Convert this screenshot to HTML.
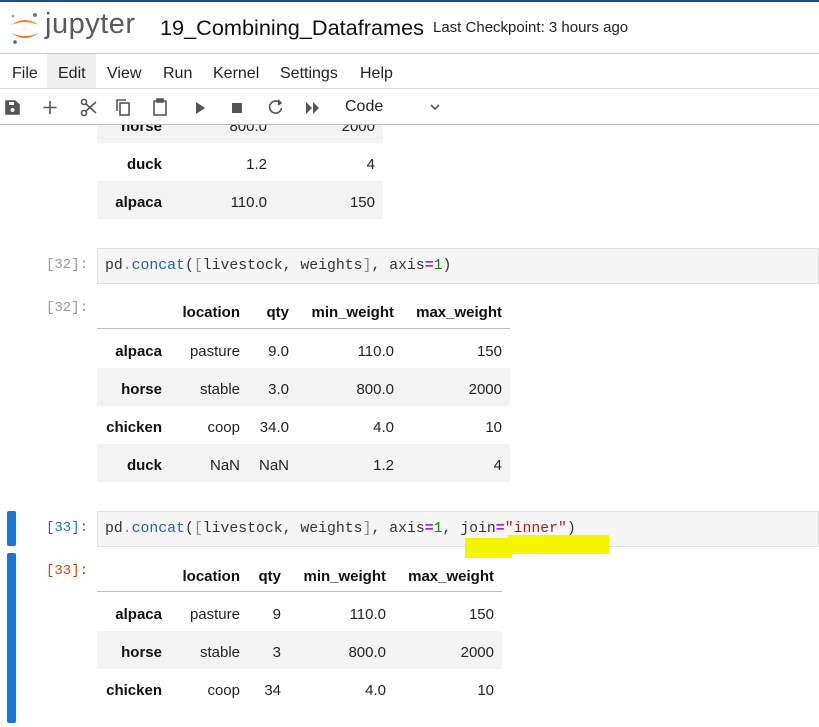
<!DOCTYPE html>
<html><head><meta charset="utf-8"><style>
*{margin:0;padding:0;box-sizing:border-box}
body{width:819px;height:727px;overflow:hidden;background:#fff;position:relative;font-family:"Liberation Sans",sans-serif;color:#222}
.a{position:absolute}
.c{position:absolute;top:3px;height:38px;line-height:38px;text-align:right;font-size:15px;white-space:nowrap;color:#222}
.b{font-weight:bold;color:#111}
.row{position:absolute;height:38px}
.g{background:#f3f3f3}
.code{position:absolute;background:#f5f5f5;border:1px solid #e0e0e0;height:36px;font-family:"Liberation Mono",monospace;font-size:14.8px;line-height:34px;padding-left:7px;color:#333;white-space:pre}
.pr{position:absolute;font-family:"Liberation Mono",monospace;font-size:14px;color:#999}
.k{color:#2060b0}.o{color:#a020f0;font-weight:bold}.n{color:#108010}.s{color:#b02020}.br{color:#888}
.mi span{position:absolute;top:2px;line-height:34px;font-size:16px;color:#222}
</style></head><body>
<div class="a" style="left:0;top:0;width:819px;height:2px;background:#1a4f8c"></div>
<svg class="a" style="left:8px;top:10px" width="34" height="36" viewBox="0 0 34 36">
<path d="M3 15 Q17 5 31 15 Q17 9 3 15Z" fill="#f37726"/>
<path d="M3 23 Q17 33 31 23 Q17 29 3 23Z" fill="#f37726"/>
<circle cx="27" cy="5" r="2" fill="#767677"/><circle cx="5" cy="6" r="1.3" fill="#989798"/><circle cx="7" cy="32" r="1.8" fill="#616262"/>
</svg>
<div class="a" style="left:45px;top:8px;font-size:29px;color:#5a5a5a;letter-spacing:0.5px">jupyter</div>
<div class="a" style="left:160px;top:15px;font-size:21.7px;color:#111">19_Combining_Dataframes</div>
<div class="a" style="left:433px;top:19px;font-size:15px;color:#222">Last Checkpoint: 3 hours ago</div>
<div class="a" style="left:0;top:53px;width:819px;height:1px;background:#c8c8c8"></div>
<div class="a" style="left:47px;top:54px;width:49px;height:34px;background:#eee"></div>
<div class="a mi" style="left:0;top:55px;width:819px;height:34px">
<span style="left:12px">File</span><span style="left:58px">Edit</span><span style="left:107px">View</span><span style="left:163px">Run</span><span style="left:213px">Kernel</span><span style="left:280px">Settings</span><span style="left:360px">Help</span></div>
<div class="a" style="left:0;top:88px;width:819px;height:1px;background:#ddd"></div>
<svg class="a" style="left:0;top:89px" width="460" height="36" viewBox="0 0 460 36" fill="none" stroke="#555" stroke-width="1.6">
<path d="M6 12h9l4 4v9H6z" fill="#555"/><rect x="9" y="13" width="5" height="3" fill="#fff" stroke="none"/><circle cx="12.5" cy="21" r="2" fill="#fff" stroke="none"/>
<path d="M50 12v13M43.5 18.5h13"/>
<circle cx="84" cy="24" r="2.5"/><circle cx="84" cy="13" r="2.5"/><path d="M86 15l10 9M86 22l10-9"/>
<rect x="120" y="14" width="9" height="12"/><path d="M117 22V11h9"/>
<rect x="154" y="12" width="12" height="14"/><rect x="157" y="10" width="6" height="3" fill="#555"/>
<path d="M196 13l9 6-9 6z" fill="#555" stroke="none"/>
<rect x="232" y="14" width="10" height="10" fill="#555" stroke="none"/>
<path d="M280 14a6 6 0 1 0 1.5 5"/><path d="M278 11l3 3-3 2" fill="#555"/>
<path d="M306 13l6 6-6 6zM313 13l6 6-6 6z" fill="#555" stroke="none"/>
<path d="M431 16l4 4 4-4"/>
</svg>
<div class="a" style="left:345px;top:98px;font-size:16px;color:#222">Code</div>
<div class="a" style="left:0;top:124px;width:819px;height:1px;background:#bbb"></div>

<div class="a" style="left:0;top:125px;width:819px;height:602px;overflow:hidden">
<div class="row g" style="left:97px;top:-20px;width:286px"><div class="c b" style="left:0;width:65px">horse</div><div class="c" style="left:0;width:170px">800.0</div><div class="c" style="left:0;width:278px">2000</div></div>
<div class="row" style="left:97px;top:18px;width:286px"><div class="c b" style="left:0;width:65px">duck</div><div class="c" style="left:0;width:170px">1.2</div><div class="c" style="left:0;width:278px">4</div></div>
<div class="row g" style="left:97px;top:56px;width:286px"><div class="c b" style="left:0;width:65px">alpaca</div><div class="c" style="left:0;width:170px">110.0</div><div class="c" style="left:0;width:278px">150</div></div>
</div>

<div class="pr" style="left:46px;top:257px">[32]:</div>
<div class="code" style="left:97px;top:248px;width:722px">pd<span class="br">.</span><span class="k">concat</span>(<span class="br">[</span>livestock, weights<span class="br">]</span>, axis<span class="o">=</span><span class="n">1</span>)</div>
<div class="pr" style="left:46px;top:300px">[32]:</div>
<div class="row" style="left:97px;top:291px;width:413px"><div class="c b" style="left:0;width:143px">location</div><div class="c b" style="left:0;width:192px">qty</div><div class="c b" style="left:0;width:297px">min_weight</div><div class="c b" style="left:0;width:405px">max_weight</div></div>
<div class="a" style="left:97px;top:328px;width:413px;height:1px;background:#bbb"></div>
<div class="row" style="left:97px;top:330px;width:413px"><div class="c b" style="left:0;width:65px">alpaca</div><div class="c" style="left:0;width:143px">pasture</div><div class="c" style="left:0;width:192px">9.0</div><div class="c" style="left:0;width:297px">110.0</div><div class="c" style="left:0;width:405px">150</div></div>
<div class="row g" style="left:97px;top:368px;width:413px"><div class="c b" style="left:0;width:65px">horse</div><div class="c" style="left:0;width:143px">stable</div><div class="c" style="left:0;width:192px">3.0</div><div class="c" style="left:0;width:297px">800.0</div><div class="c" style="left:0;width:405px">2000</div></div>
<div class="row" style="left:97px;top:406px;width:413px"><div class="c b" style="left:0;width:65px">chicken</div><div class="c" style="left:0;width:143px">coop</div><div class="c" style="left:0;width:192px">34.0</div><div class="c" style="left:0;width:297px">4.0</div><div class="c" style="left:0;width:405px">10</div></div>
<div class="row g" style="left:97px;top:444px;width:413px"><div class="c b" style="left:0;width:65px">duck</div><div class="c" style="left:0;width:143px">NaN</div><div class="c" style="left:0;width:192px">NaN</div><div class="c" style="left:0;width:297px">1.2</div><div class="c" style="left:0;width:405px">4</div></div>

<div class="a" style="left:7px;top:511px;width:9px;height:35px;background:#1976d2;border-radius:2px"></div>
<div class="a" style="left:7px;top:553px;width:9px;height:170px;background:#1976d2;border-radius:2px"></div>
<div class="pr" style="left:46px;top:520px;color:#1976d2">[33]:</div>
<div class="code" style="left:97px;top:511px;width:722px">pd<span class="br">.</span><span class="k">concat</span>(<span class="br">[</span>livestock, weights<span class="br">]</span>, axis<span class="o">=</span><span class="n">1</span>, join<span class="o">=</span><span class="s">"inner"</span>)</div>
<div class="a" style="left:465px;top:538px;width:47px;height:20px;background:#f5f500"></div>
<div class="a" style="left:508px;top:535px;width:101px;height:19px;background:#f5f500"></div>
<div class="pr" style="left:46px;top:563px;color:#d84315">[33]:</div>
<div class="row" style="left:97px;top:555px;width:405px"><div class="c b" style="left:0;width:143px">location</div><div class="c b" style="left:0;width:184px">qty</div><div class="c b" style="left:0;width:289px">min_weight</div><div class="c b" style="left:0;width:397px">max_weight</div></div>
<div class="a" style="left:97px;top:591px;width:405px;height:1px;background:#bbb"></div>
<div class="row" style="left:97px;top:593px;width:405px"><div class="c b" style="left:0;width:65px">alpaca</div><div class="c" style="left:0;width:143px">pasture</div><div class="c" style="left:0;width:184px">9</div><div class="c" style="left:0;width:289px">110.0</div><div class="c" style="left:0;width:397px">150</div></div>
<div class="row g" style="left:97px;top:631px;width:405px"><div class="c b" style="left:0;width:65px">horse</div><div class="c" style="left:0;width:143px">stable</div><div class="c" style="left:0;width:184px">3</div><div class="c" style="left:0;width:289px">800.0</div><div class="c" style="left:0;width:397px">2000</div></div>
<div class="row" style="left:97px;top:669px;width:405px"><div class="c b" style="left:0;width:65px">chicken</div><div class="c" style="left:0;width:143px">coop</div><div class="c" style="left:0;width:184px">34</div><div class="c" style="left:0;width:289px">4.0</div><div class="c" style="left:0;width:397px">10</div></div>
</body></html>
